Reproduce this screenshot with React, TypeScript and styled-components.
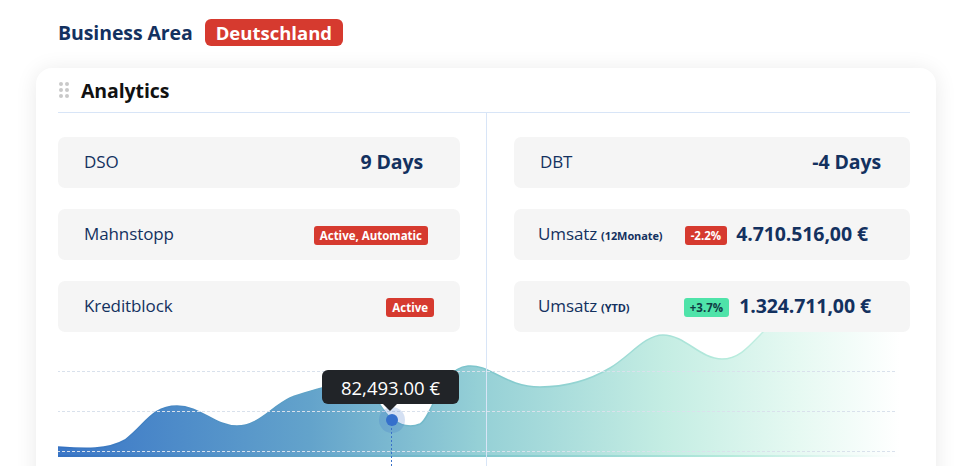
import React from 'react'
import styled, { createGlobalStyle } from 'styled-components'

const Colors = {
  navy: '#13315f',
  red: '#d63a2f',
  green: '#4fe3a9',
  tile: '#f5f5f5',
  line: '#d8e5f7',
}

const GlobalStyle = createGlobalStyle`
  html, body {
    margin: 0;
    padding: 0;
    background: #ffffff;
    overflow: hidden;
  }
  body {
    font-family: 'Open Sans', 'Noto Sans', sans-serif;
  }
`

const Page = styled.div`
  width: 980px;
  height: 466px;
  overflow: hidden;
`

const AreaRow = styled.div`
  display: flex;
  align-items: center;
  gap: 12px;
  padding: 19px 0 0 58px;
  height: 27px;
`

const AreaTitle = styled.h2`
  margin: 0;
  font-size: 19.5px;
  font-weight: 700;
  color: ${Colors.navy};
  letter-spacing: -0.1px;
`

const AreaBadge = styled.span`
  display: inline-flex;
  align-items: center;
  height: 27px;
  padding: 0 11px;
  border-radius: 6px;
  background: ${Colors.red};
  color: #fff;
  font-size: 18.5px;
  font-weight: 700;
`

const Card = styled.section`
  margin: 22px 0 0 36px;
  width: 900px;
  min-height: 460px;
  box-sizing: border-box;
  padding: 0 26px 0 22px;
  border-radius: 16px;
  background: #fff;
  box-shadow: 0 2px 22px rgba(0, 0, 0, 0.09);
`

const CardHeader = styled.div`
  display: flex;
  align-items: center;
  gap: 12px;
  height: 44px;
  border-bottom: 1px solid ${Colors.line};
`

const Handle = styled.div`
  display: grid;
  grid-template-columns: 4px 4px;
  grid-auto-rows: 4px;
  gap: 2px 2px;
  margin-left: 1px;

  span {
    width: 4px;
    height: 4px;
    border-radius: 50%;
    background: #c9c9c9;
  }
`

const CardTitle = styled.h3`
  margin: 0;
  font-size: 19.5px;
  font-weight: 700;
  color: #111;
  letter-spacing: -0.1px;
`

const CardBody = styled.div`
  position: relative;
  padding-top: 24px;

  &::after {
    content: '';
    position: absolute;
    left: 428px;
    top: 0;
    bottom: 0;
    width: 1px;
    background: ${Colors.line};
  }
`

const TileGrid = styled.div`
  display: grid;
  grid-template-columns: 402px 396px;
  column-gap: 54px;
  row-gap: 21px;
`

const Tile = styled.div<{ $pl: number; $pr: number }>`
  display: flex;
  align-items: center;
  justify-content: space-between;
  height: 51px;
  box-sizing: border-box;
  padding: 0 ${p => p.$pr}px 2px ${p => p.$pl}px;
  border-radius: 7px;
  background: ${Colors.tile};
  color: ${Colors.navy};
`

const Label = styled.span`
  font-size: 17px;
  font-weight: 400;
  letter-spacing: -0.1px;
`

const Small = styled.span`
  font-size: 11px;
  font-weight: 700;
  margin-left: 4px;
`

const Value = styled.span`
  font-size: 19.5px;
  font-weight: 700;
  letter-spacing: -0.1px;
`

const ValueGroup = styled.div<{ $gap: number }>`
  display: flex;
  align-items: center;
  gap: ${p => p.$gap}px;
`

const Pill = styled.span<{ $tone: 'red' | 'green' }>`
  display: inline-flex;
  align-items: center;
  height: 19px;
  padding: 0 6px;
  border-radius: 3px;
  background: ${p => (p.$tone === 'red' ? Colors.red : Colors.green)};
  color: ${p => (p.$tone === 'red' ? '#fff' : '#0f3c45')};
  font-size: 11.5px;
  font-weight: 700;
  margin-top: 3px;
`

const ChartWrap = styled.div`
  position: relative;
  height: 140px;

  svg {
    display: block;
  }
`

const Tooltip = styled.div`
  position: absolute;
  left: 264px;
  top: 38px;
  width: 137px;
  height: 34px;
  border-radius: 6px;
  background: #212428;
  color: #fff;
  display: flex;
  align-items: center;
  justify-content: center;
  font-family: 'Open Sans', sans-serif;
  font-size: 18.5px;

  &::after {
    content: '';
    position: absolute;
    left: 61px;
    bottom: -7px;
    border-left: 7px solid transparent;
    border-right: 7px solid transparent;
    border-top: 7px solid #212428;
  }
`

const areaPath =
  'M57,447 C85,449 108,450 125,440 C145,425 152,406 177,406 C200,406 215,426 237,426 ' +
  'C258,426 270,408 290,398 C310,390 335,385 355,380 C370,377 378,410 392,419 ' +
  'C400,425 410,428 420,424 C432,418 440,368 468,366 C490,364 505,387 540,387 ' +
  'C565,387 590,380 610,368 C630,356 645,335 663,335 C685,335 700,359 722,359 ' +
  'C740,359 750,345 765,330 C790,305 820,300 860,300 L912,300'

const Chart = () => (
  <ChartWrap>
    <svg width={852} height={140} viewBox="58 332 852 140">
      <defs>
        <linearGradient id="fill" x1="57" x2="900" y1="0" y2="0" gradientUnits="userSpaceOnUse">
          <stop offset="0" stopColor="#3a76c7" />
          <stop offset="0.3" stopColor="#63a3cb" />
          <stop offset="0.5" stopColor="#95d0d6" />
          <stop offset="0.72" stopColor="#c4ede3" />
          <stop offset="0.88" stopColor="#e6f9f2" />
          <stop offset="1" stopColor="#ffffff" />
        </linearGradient>
        <linearGradient id="stroke" x1="57" x2="900" y1="0" y2="0" gradientUnits="userSpaceOnUse">
          <stop offset="0" stopColor="#3470c0" />
          <stop offset="0.5" stopColor="#7ec6cc" />
          <stop offset="0.8" stopColor="#b6ebdc" />
          <stop offset="1" stopColor="#ffffff" />
        </linearGradient>
      </defs>
      <path d={areaPath + ' L912,457 L57,457 Z'} fill="url(#fill)" />
      <path d={areaPath} fill="none" stroke="url(#stroke)" strokeWidth={1.5} />
      <line x1={57} x2={900} y1={456} y2={456} stroke="url(#stroke)" strokeWidth={2} />
      {[371.5, 411.5, 451.5].map(y => (
        <line key={y} x1={57} x2={897} y1={y} y2={y} stroke="#d9e1ec" strokeWidth={1} strokeDasharray="3 2" />
      ))}
      <line x1={391.5} x2={391.5} y1={420} y2={470} stroke="#3a72c8" strokeWidth={1} strokeDasharray="2 2" />
      <circle cx={392} cy={420} r={13} fill="#3a72c8" opacity={0.22} />
      <circle cx={392} cy={420} r={6} fill="#3570cc" />
    </svg>
    <Tooltip>{'82,493.00 €'}</Tooltip>
  </ChartWrap>
)

const App = () => {
  return (
    <Page>
      <GlobalStyle />
      <AreaRow>
        <AreaTitle>{'Business Area'}</AreaTitle>
        <AreaBadge>{'Deutschland'}</AreaBadge>
      </AreaRow>
      <Card>
        <CardHeader>
          <Handle>
            <span />
            <span />
            <span />
            <span />
            <span />
            <span />
          </Handle>
          <CardTitle>{'Analytics'}</CardTitle>
        </CardHeader>
        <CardBody>
          <TileGrid>
            <Tile $pl={26} $pr={37}>
              <Label>{'DSO'}</Label>
              <Value>{'9 Days'}</Value>
            </Tile>
            <Tile $pl={26} $pr={29}>
              <Label>{'DBT'}</Label>
              <Value>{'-4 Days'}</Value>
            </Tile>
            <Tile $pl={26} $pr={32}>
              <Label>{'Mahnstopp'}</Label>
              <Pill $tone="red">{'Active, Automatic'}</Pill>
            </Tile>
            <Tile $pl={24} $pr={42}>
              <Label>
                {'Umsatz'}
                <Small>{'(12Monate)'}</Small>
              </Label>
              <ValueGroup $gap={9}>
                <Pill $tone="red">{'-2.2%'}</Pill>
                <Value>{'4.710.516,00 €'}</Value>
              </ValueGroup>
            </Tile>
            <Tile $pl={26} $pr={26}>
              <Label>{'Kreditblock'}</Label>
              <Pill $tone="red">{'Active'}</Pill>
            </Tile>
            <Tile $pl={24} $pr={39}>
              <Label>
                {'Umsatz'}
                <Small>{'(YTD)'}</Small>
              </Label>
              <ValueGroup $gap={10}>
                <Pill $tone="green">{'+3.7%'}</Pill>
                <Value>{'1.324.711,00 €'}</Value>
              </ValueGroup>
            </Tile>
          </TileGrid>
          <Chart />
        </CardBody>
      </Card>
    </Page>
  )
}

export default App
